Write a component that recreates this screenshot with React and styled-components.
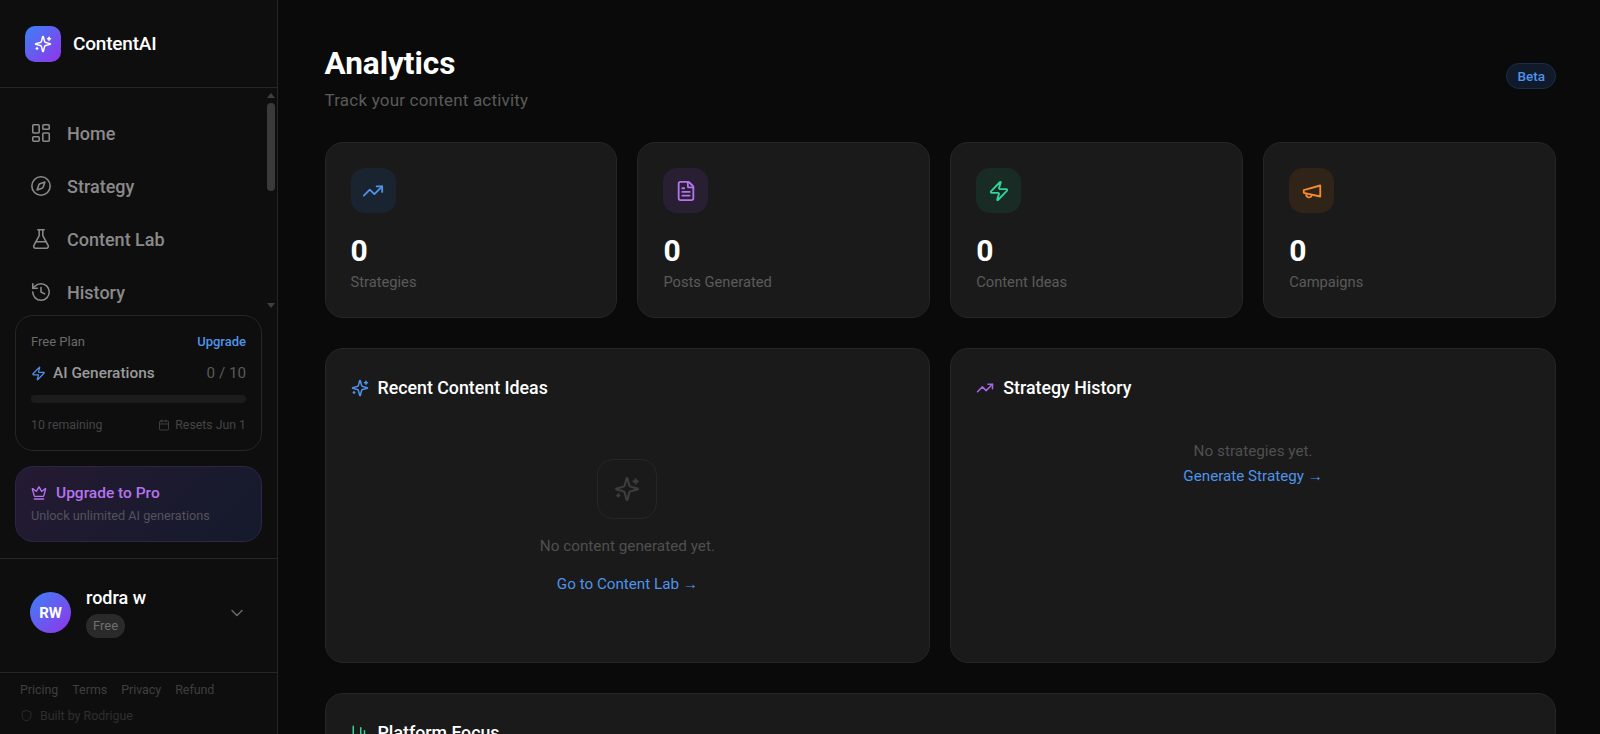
import React from "react";
import styled, { createGlobalStyle } from "styled-components";
import {
  BarChart3,
  Calendar,
  ChevronDown,
  Compass,
  Crown,
  FileText,
  FlaskConical,
  History,
  LayoutDashboard,
  Shield,
  TrendingUp,
  Zap,
} from "lucide-react";

const GlobalStyle = createGlobalStyle`
  html, body { margin: 0; height: 100%; overflow: hidden; background: #0a0a0a; }
  body { font-family: Roboto, "Open Sans", sans-serif; }
  #root { height: 100%; }
  * { box-sizing: border-box; }
`;

// --- LAYOUT ---
const Page = styled.div`
  display: flex;
  height: 734px;
  overflow: hidden;
  background: #0a0a0a;
`;

const Sidebar = styled.aside`
  width: 278px;
  flex-shrink: 0;
  display: flex;
  flex-direction: column;
  background: #0e0e0f;
  border-right: 1px solid #262626;
`;

const Brand = styled.div`
  height: 88px;
  flex-shrink: 0;
  display: flex;
  align-items: center;
  gap: 12px;
  padding: 0 25px;
  border-bottom: 1px solid #262626;
`;

const LogoMark = styled.div`
  width: 36px;
  height: 36px;
  border-radius: 10px;
  display: flex;
  align-items: center;
  justify-content: center;
  color: #fff;
  background: linear-gradient(135deg, #3b82f6, #9333ea);
`;

const BrandName = styled.span`
  color: #fff;
  font-size: 19px;
  font-weight: 500;
  letter-spacing: -0.2px;
`;

const NavArea = styled.nav`
  position: relative;
  height: 227px;
  flex-shrink: 0;
  padding: 29px 0 0 30px;
  display: flex;
  flex-direction: column;
  gap: 21px;
  overflow: hidden;
`;

const NavItem = styled.a`
  height: 32px;
  flex-shrink: 0;
  display: flex;
  align-items: center;
  gap: 15px;
  color: #8a8a8a;
  font-size: 18px;
  font-weight: 500;
`;

const ScrollTrack = styled.div`
  position: absolute;
  top: 0;
  right: 2px;
  bottom: 0;
  width: 8px;
`;

const ScrollThumb = styled.div`
  position: absolute;
  top: 15px;
  left: 0;
  width: 8px;
  height: 88px;
  border-radius: 4px;
  background: #3a3a3b;
`;

const ScrollArrow = styled.div`
  position: absolute;
  left: 0;
  ${(p) => (p.$down ? "bottom: 7px;" : "top: 5px;")}
  width: 0;
  height: 0;
  border-left: 4px solid transparent;
  border-right: 4px solid transparent;
  ${(p) => (p.$down ? "border-top: 5px solid #3f3f40;" : "border-bottom: 5px solid #3f3f40;")}
`;

const PlanCard = styled.section`
  margin: 0 15px;
  height: 136px;
  flex-shrink: 0;
  padding: 18px 15px 0;
  border: 1px solid #262626;
  border-radius: 18px;
`;

const PlanTop = styled.div`
  display: flex;
  align-items: center;
  justify-content: space-between;
  font-size: 13px;
  color: #6a6a6a;
`;

const UpgradeLink = styled.a`
  color: #4f93ea;
  font-weight: 500;
`;

const UsageRow = styled.div`
  display: flex;
  align-items: center;
  justify-content: space-between;
  margin-top: 15px;
`;

const UsageName = styled.div`
  display: flex;
  align-items: center;
  gap: 7px;
  color: #9a9a9a;
  font-size: 15.4px;
  font-weight: 500;
  svg { color: #4f93ea; }
`;

const UsageCount = styled.span`
  color: #5a5a5a;
  font-size: 15.2px;
`;

const Progress = styled.div`
  height: 8px;
  margin-top: 13px;
  border-radius: 4px;
  background: #1c1c1c;
`;

const PlanFoot = styled.div`
  display: flex;
  align-items: center;
  justify-content: space-between;
  margin-top: 15px;
  font-size: 12.3px;
  color: #454545;
`;

const ResetNote = styled.span`
  display: flex;
  align-items: center;
  gap: 5px;
`;

const ProCard = styled.section`
  margin: 15px 15px 0;
  height: 76px;
  flex-shrink: 0;
  padding: 17px 15px 0;
  border: 1px solid #2b2547;
  border-radius: 18px;
  background: linear-gradient(135deg, #251a33, #141a2b);
`;

const ProTitle = styled.div`
  display: flex;
  align-items: center;
  gap: 9px;
  color: #b574ee;
  font-size: 15.5px;
  font-weight: 500;
`;

const ProText = styled.div`
  margin-top: 6px;
  font-size: 12.7px;
  color: #53535e;
`;

const UserRow = styled.div`
  margin-top: 16px;
  height: 115px;
  flex-shrink: 0;
  display: flex;
  align-items: center;
  padding: 0 30px 6px;
  gap: 15px;
  border-top: 1px solid #262626;
  border-bottom: 1px solid #262626;
`;

const Avatar = styled.div`
  width: 41px;
  height: 41px;
  border-radius: 50%;
  display: flex;
  align-items: center;
  justify-content: center;
  color: #fff;
  font-size: 15px;
  font-weight: 700;
  background: linear-gradient(135deg, #3b82f6, #9333ea);
`;

const UserInfo = styled.div`
  flex: 1;
`;

const UserName = styled.div`
  color: #fff;
  font-size: 18px;
  font-weight: 500;
  line-height: 22px;
`;

const PlanBadge = styled.span`
  display: inline-block;
  margin-top: 5px;
  padding: 0 7px;
  height: 24px;
  line-height: 24px;
  border-radius: 12px;
  background: #2a2a2a;
  color: #6f6f6f;
  font-size: 13px;
`;

const FooterArea = styled.footer`
  padding: 9px 20px 0;
  font-size: 12.4px;
  color: #3f3f3f;
`;

const FooterLinks = styled.div`
  display: flex;
  gap: 14px;
`;

const BuiltBy = styled.div`
  display: flex;
  align-items: center;
  gap: 7px;
  margin-top: 11px;
  color: #2f2f2f;
`;

// --- MAIN ---
const Main = styled.main`
  flex: 1;
  min-width: 0;
  padding: 42px 44px 0 46.5px;
  overflow: hidden;
`;

const PageHead = styled.header`
  display: flex;
  align-items: flex-start;
  justify-content: space-between;
  height: 71px;
`;

const Title = styled.h1`
  margin: 0;
  color: #fff;
  font-size: 31.5px;
  font-weight: 700;
  line-height: 44px;
`;

const Subtitle = styled.p`
  margin: 0;
  color: #5a5a5a;
  font-size: 17px;
  line-height: 28px;
  letter-spacing: 0.2px;
`;

const BetaPill = styled.span`
  margin-top: 21px;
  height: 26px;
  padding: 0 10px;
  display: flex;
  align-items: center;
  border-radius: 13px;
  border: 1px solid #1b2d4a;
  background: #101a2b;
  color: #4f93ea;
  font-size: 13.5px;
  font-weight: 500;
`;

const StatGrid = styled.div`
  display: grid;
  grid-template-columns: repeat(4, 1fr);
  gap: 20px;
  margin-top: 29px;
`;

const Card = styled.section`
  background: #1a1a1a;
  border: 1px solid #262626;
  border-radius: 18px;
  padding: 25px;
`;

const StatCard = styled(Card)`
  height: 176px;
`;

const IconBox = styled.div`
  width: 45px;
  height: 45px;
  border-radius: 14px;
  display: flex;
  align-items: center;
  justify-content: center;
  color: ${(p) => p.$color};
  background: ${(p) => p.$bg};
`;

const StatValue = styled.div`
  margin-top: 18px;
  color: #fff;
  font-size: 30px;
  font-weight: 700;
  line-height: 40px;
`;

const StatLabel = styled.div`
  margin-top: -1px;
  color: #5a5a5a;
  font-size: 14.7px;
  line-height: 24px;
`;

const PanelGrid = styled.div`
  display: grid;
  grid-template-columns: repeat(2, 1fr);
  gap: 20px;
  margin-top: 30px;
`;

const Panel = styled(Card)`
  height: 315px;
`;

const PanelTitle = styled.h2`
  margin: 1px 0 0;
  display: flex;
  align-items: center;
  gap: 9px;
  color: #fff;
  font-size: 17.8px;
  font-weight: 500;
  line-height: 26px;
  svg { color: ${(p) => p.$color}; flex-shrink: 0; }
`;

const EmptyIdeas = styled.div`
  display: flex;
  flex-direction: column;
  align-items: center;
  margin-top: 58px;
`;

const EmptyIcon = styled.div`
  width: 60px;
  height: 60px;
  border-radius: 16px;
  border: 1px solid #262626;
  display: flex;
  align-items: center;
  justify-content: center;
  color: #3d3d3d;
`;

const EmptyText = styled.p`
  margin: ${(p) => p.$gap}px 0 0;
  color: #4f4f4f;
  font-size: 15.3px;
  line-height: 24px;
`;

const PanelLink = styled.a`
  display: block;
  margin-top: ${(p) => p.$gap}px;
  color: #4f93ea;
  font-size: 15.2px;
  line-height: 24px;
`;

const EmptyStrategies = styled.div`
  text-align: center;
  margin-top: 38px;
`;

const FocusCard = styled(Card)`
  margin-top: 30px;
  height: 200px;
`;

// older lucide outlines, the ones in the package changed since
const MegaphoneIcon = () => (
  <svg
    width="22"
    height="22"
    viewBox="0 0 24 24"
    fill="none"
    stroke="currentColor"
    strokeWidth="2"
    strokeLinecap="round"
    strokeLinejoin="round"
  >
    <path d="m3 11 18-5v12L3 14v-3z" />
    <path d="M11.6 16.8a3 3 0 1 1-5.8-1.6" />
  </svg>
);

const SparkIcon = ({ size }) => (
  <svg
    width={size}
    height={size}
    viewBox="0 0 24 24"
    fill="none"
    stroke="currentColor"
    strokeWidth="2"
    strokeLinecap="round"
    strokeLinejoin="round"
  >
    <path d="M9.937 15.5A2 2 0 0 0 8.5 14.063l-6.135-1.582a.5.5 0 0 1 0-.962L8.5 9.936A2 2 0 0 0 9.937 8.5l1.582-6.135a.5.5 0 0 1 .963 0L14.063 8.5A2 2 0 0 0 15.5 9.937l6.135 1.581a.5.5 0 0 1 0 .964L15.5 14.063a2 2 0 0 0-1.437 1.437l-1.582 6.135a.5.5 0 0 1-.963 0z" />
    <path d="M20 3v4" />
    <path d="M22 5h-4" />
    <path d="M4 17v2" />
    <path d="M5 18H3" />
  </svg>
);

const stats = [
  { label: "Strategies", icon: <TrendingUp size={22} />, color: "#4f93ea", bg: "#1a2430" },
  { label: "Posts Generated", icon: <FileText size={22} />, color: "#b574ee", bg: "#281f33" },
  { label: "Content Ideas", icon: <Zap size={22} />, color: "#34d399", bg: "#182b25" },
  { label: "Campaigns", icon: <MegaphoneIcon />, color: "#f58a2e", bg: "#302318" },
];

const navItems = [
  { label: "Home", Icon: LayoutDashboard },
  { label: "Strategy", Icon: Compass },
  { label: "Content Lab", Icon: FlaskConical },
  { label: "History", Icon: History },
];

export default function App() {
  return (
    <Page>
      <GlobalStyle />
      <Sidebar>
        <Brand>
          <LogoMark>
            <SparkIcon size={18} />
          </LogoMark>
          <BrandName>ContentAI</BrandName>
        </Brand>

        <NavArea>
          {navItems.map(({ label, Icon }) => (
            <NavItem key={label}>
              <Icon size={22} strokeWidth={1.7} />
              {label}
            </NavItem>
          ))}
          <ScrollTrack>
            <ScrollArrow />
            <ScrollThumb />
            <ScrollArrow $down />
          </ScrollTrack>
        </NavArea>

        <PlanCard>
          <PlanTop>
            <span>Free Plan</span>
            <UpgradeLink>Upgrade</UpgradeLink>
          </PlanTop>
          <UsageRow>
            <UsageName>
              <Zap size={15} />
              AI Generations
            </UsageName>
            <UsageCount>0 / 10</UsageCount>
          </UsageRow>
          <Progress />
          <PlanFoot>
            <span>10 remaining</span>
            <ResetNote>
              <Calendar size={12} strokeWidth={1.7} />
              Resets Jun 1
            </ResetNote>
          </PlanFoot>
        </PlanCard>

        <ProCard>
          <ProTitle>
            <Crown size={16} />
            Upgrade to Pro
          </ProTitle>
          <ProText>Unlock unlimited AI generations</ProText>
        </ProCard>

        <UserRow>
          <Avatar>RW</Avatar>
          <UserInfo>
            <UserName>rodra w</UserName>
            <PlanBadge>Free</PlanBadge>
          </UserInfo>
          <ChevronDown size={20} color="#6a6a6a" strokeWidth={1.8} />
        </UserRow>

        <FooterArea>
          <FooterLinks>
            <span>Pricing</span>
            <span>Terms</span>
            <span>Privacy</span>
            <span>Refund</span>
          </FooterLinks>
          <BuiltBy>
            <Shield size={13} strokeWidth={1.7} />
            Built by Rodrigue
          </BuiltBy>
        </FooterArea>
      </Sidebar>

      <Main>
        <PageHead>
          <div>
            <Title>Analytics</Title>
            <Subtitle>Track your content activity</Subtitle>
          </div>
          <BetaPill>Beta</BetaPill>
        </PageHead>

        <StatGrid>
          {stats.map(({ label, icon, color, bg }) => (
            <StatCard key={label}>
              <IconBox $color={color} $bg={bg}>
                {icon}
              </IconBox>
              <StatValue>0</StatValue>
              <StatLabel>{label}</StatLabel>
            </StatCard>
          ))}
        </StatGrid>

        <PanelGrid>
          <Panel>
            <PanelTitle $color="#4f93ea">
              <SparkIcon size={18} />
              Recent Content Ideas
            </PanelTitle>
            <EmptyIdeas>
              <EmptyIcon>
                <SparkIcon size={26} />
              </EmptyIcon>
              <EmptyText $gap={15}>No content generated yet.</EmptyText>
              <PanelLink $gap={14}>Go to Content Lab →</PanelLink>
            </EmptyIdeas>
          </Panel>
          <Panel>
            <PanelTitle $color="#a566e6">
              <TrendingUp size={18} />
              Strategy History
            </PanelTitle>
            <EmptyStrategies>
              <EmptyText $gap={16}>No strategies yet.</EmptyText>
              <PanelLink $gap={1}>Generate Strategy →</PanelLink>
            </EmptyStrategies>
          </Panel>
        </PanelGrid>

        <FocusCard>
          <PanelTitle $color="#34d399">
            <BarChart3 size={18} />
            Platform Focus
          </PanelTitle>
        </FocusCard>
      </Main>
    </Page>
  );
}
